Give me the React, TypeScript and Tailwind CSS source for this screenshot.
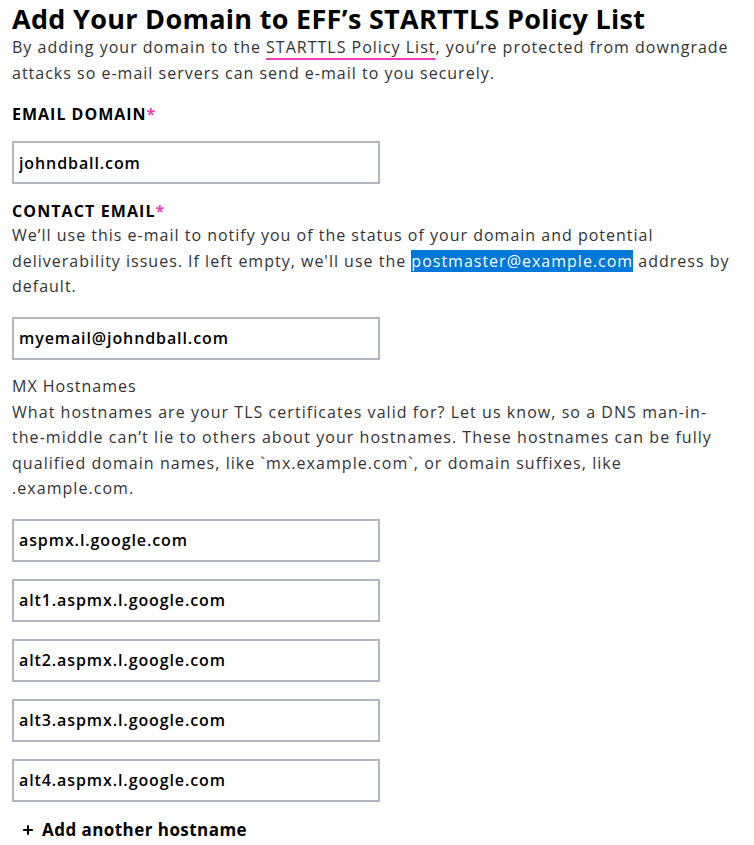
import { Plus } from 'lucide-react';

const hostnames = [
  'aspmx.l.google.com',
  'alt1.aspmx.l.google.com',
  'alt2.aspmx.l.google.com',
  'alt3.aspmx.l.google.com',
  'alt4.aspmx.l.google.com',
];

function Field({ value }: { value: string }) {
  return (
    <input
      readOnly
      defaultValue={value}
      className="block w-[368px] h-[43px] border-2 border-[#b1b7c1] bg-white pl-[5px] text-[16px] tracking-[0.9px] font-semibold text-black outline-none"
    />
  );
}

function Required() {
  return <span className="text-[#f23bbf]">*</span>;
}

export default function App() {
  return (
    <div className="min-h-screen bg-white px-3 text-[#333] font-['Open_Sans',sans-serif]">
      <h1 className="text-[27px] leading-[37px] tracking-[0.3px] font-bold text-black whitespace-nowrap">
        Add Your Domain to EFF’s STARTTLS Policy List
      </h1>
      <p className="-mt-[2px] text-[16px] leading-[25.6px] tracking-[1px] whitespace-nowrap">
        By adding your domain to the{' '}
        <a className="underline decoration-[#f23bbf] decoration-2 underline-offset-[5px]">
          STARTTLS Policy List
        </a>
        , you’re protected from downgrade
        <br />
        attacks so e-mail servers can send e-mail to you securely.
      </p>

      <label className="mt-[15px] block text-[16px] leading-[26px] tracking-[1px] font-bold uppercase text-black">
        Email Domain<Required />
      </label>
      <div className="mt-[14px]">
        <Field value="johndball.com" />
      </div>

      <label className="mt-[15px] block text-[16px] leading-[24px] tracking-[1.1px] font-bold uppercase text-black">
        Contact Email<Required />
      </label>
      <p className="text-[16px] leading-[25.6px] tracking-[1px] whitespace-nowrap">
        We’ll use this e-mail to notify you of the status of your domain and potential
        <br />
        deliverability issues. If left empty, we'll use the{' '}
        <span className="bg-[#0078d7] text-white">postmaster@example.com</span> address by
        <br />
        default.
      </p>
      <div className="mt-[17px]">
        <Field value="myemail@johndball.com" />
      </div>

      <div className="mt-[14px] text-[16px] leading-[25.6px] tracking-[1px]">MX Hostnames</div>
      <p className="text-[16px] leading-[25.6px] tracking-[1.05px] whitespace-nowrap">
        What hostnames are your TLS certificates valid for? Let us know, so a DNS man-in-
        <br />
        the-middle can’t lie to others about your hostnames. These hostnames can be fully
        <br />
        qualified domain names, like `mx.example.com`, or domain suffixes, like
        <br />
        .example.com.
      </p>
      <div className="mt-[17px] flex flex-col gap-[17px]">
        {hostnames.map((h) => (
          <Field key={h} value={h} />
        ))}
      </div>

      <button className="mt-[16px] ml-[9px] flex items-center gap-[7px] text-[17px] leading-[24px] tracking-[0.45px] font-bold text-black">
        <Plus className="w-[14px] h-[14px]" strokeWidth={3.5} />
        Add another hostname
      </button>
    </div>
  );
}
